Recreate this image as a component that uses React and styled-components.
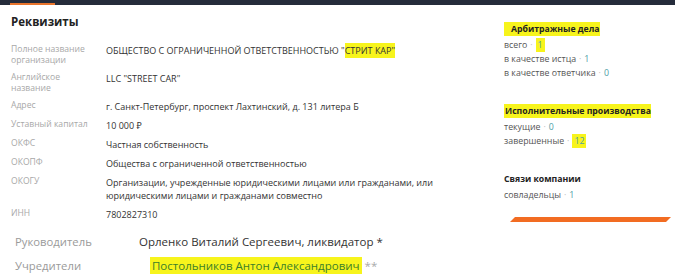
import React from 'react';
import styled, { createGlobalStyle } from 'styled-components';

const Global = createGlobalStyle`
  html, body {
    margin: 0;
    background: #fff;
    font-family: "Open Sans", "Noto Sans", sans-serif;
    color: #333;
  }
`

const Page = styled.div`
  width: 680px;
  height: 275px;
  overflow: hidden;
  background: #fff;
`

const TopBar = styled.div`
  width: 675px;
  height: 5px;
  background: #252c3b;
  display: flex;
  align-items: flex-end;
  padding-left: 10px;
  box-sizing: border-box;
`

const ActiveTab = styled.div`
  width: 45px;
  height: 2px;
  background: #e8742c;
`

const Main = styled.div`
  display: flex;
  padding-left: 11px;
`

const LeftCol = styled.div`
  width: 493px;
  flex-shrink: 0;
`

const Heading = styled.h2`
  margin: 8px 0 0;
  font-size: 11.5px;
  line-height: 17px;
  font-weight: 700;
  color: #222;
`

const Details = styled.div`
  display: grid;
  grid-template-columns: 95px 1fr;
  row-gap: 6px;
  margin-top: 14px;
`

const Label = styled.div`
  font-size: 8.6px;
  line-height: 11px;
  color: #a8a8a8;
`

const Value = styled.div`
  font-size: 9px;
  line-height: 13px;
  color: #333;
`

const Mark = styled.span`
  background: #f7f41c;
  padding: 1px ${(p) => p.$padR || 0}px 1px ${(p) => p.$padL || 0}px;
`

const People = styled.div`
  display: grid;
  grid-template-columns: 124px 1fr;
  row-gap: 8px;
  margin-top: 13px;
  padding-left: 4px;
`

const PersonLabel = styled.div`
  font-size: 11.3px;
  line-height: 16px;
  color: #9a9a9a;
`

const PersonValue = styled.div`
  font-size: 11.5px;
  line-height: 16px;
  color: #333;
  padding-left: ${(p) => p.$indent || 0}px;
`

const Founder = styled.span`
  background: #f7f41c;
  color: #3b7f2a;
  padding: 1px 2px;
`

const Stars = styled.span`
  color: #aaa;
  margin-left: 3px;
`

const Aside = styled.aside`
  width: 170px;
  padding-top: 17px;
  display: flex;
  flex-direction: column;
`

const Section = styled.section`
  margin-bottom: 24px;
`

const SectionTitle = styled.div`
  font-size: 8.7px;
  line-height: 14px;
  font-weight: 700;
  color: #222;
  margin-bottom: 2px;
`

const Item = styled.div`
  font-size: 8.8px;
  line-height: 14px;
  color: #555;
`

const Dot = styled.span`
  color: #bbb;
  margin: 0 3px;
`

const Num = styled.span`
  color: #4e9ea6;
`

const NumMark = styled.span`
  color: #4e9ea6;
  background: #f7f41c;
  padding: 1px 2px;
`

const Stripe = styled.div`
  margin: -9px 0 0 6px;
  width: 161px;
  height: 5px;
  background: #f26c22;
  clip-path: polygon(5px 0, 100% 0, calc(100% - 5px) 100%, 0 100%);
`

function Stat({ label, value, marked }) {
  return (
    <Item>
      {label}
      <Dot>·</Dot>
      {marked ? <NumMark>{value}</NumMark> : <Num>{value}</Num>}
    </Item>
  );
}

const rows = [
  [<>Полное название<br />организации</>, <>ОБЩЕСТВО С ОГРАНИЧЕННОЙ ОТВЕТСТВЕННОСТЬЮ "<Mark>СТРИТ КАР"</Mark></>],
  [<>Английское<br />название</>, 'LLC "STREET CAR"'],
  ['Адрес', 'г. Санкт-Петербург, проспект Лахтинский, д. 131 литера Б'],
  ['Уставный капитал', '10 000 ₽'],
  ['ОКФС', 'Частная собственность'],
  ['ОКОПФ', 'Общества с ограниченной ответственностью'],
  ['ОКОГУ', <>Организации, учрежденные юридическими лицами или гражданами, или<br />юридическими лицами и гражданами совместно</>],
  ['ИНН', '7802827310'],
];

export default function App() {
  return (
    <Page>
      <Global />
      <TopBar>
        <ActiveTab />
      </TopBar>
      <Main>
        <LeftCol>
          <Heading>Реквизиты</Heading>
          <Details>
            {rows.map(([label, value], i) => (
              <React.Fragment key={i}>
                <Label>{label}</Label>
                <Value>{value}</Value>
              </React.Fragment>
            ))}
          </Details>
          <People>
            <PersonLabel>Руководитель</PersonLabel>
            <PersonValue>Орленко Виталий Сергеевич, ликвидатор *</PersonValue>
            <PersonLabel>Учредители</PersonLabel>
            <PersonValue $indent={11}>
              <Founder>Постольников Антон Александрович</Founder>
              <Stars>**</Stars>
            </PersonValue>
          </People>
        </LeftCol>
        <Aside>
          <Section>
            <SectionTitle><Mark $padL={7}>Арбитражные дела</Mark></SectionTitle>
            <Stat label="всего" value="1" marked />
            <Stat label="в качестве истца" value="1" />
            <Stat label="в качестве ответчика" value="0" />
          </Section>
          <Section>
            <SectionTitle><Mark $padL={1}>Исполнительные производства</Mark></SectionTitle>
            <Stat label="текущие" value="0" />
            <Stat label="завершенные" value="12" marked />
          </Section>
          <Section>
            <SectionTitle>Связи компании</SectionTitle>
            <Stat label="совладельцы" value="1" />
          </Section>
          <Stripe />
        </Aside>
      </Main>
    </Page>
  );
}
